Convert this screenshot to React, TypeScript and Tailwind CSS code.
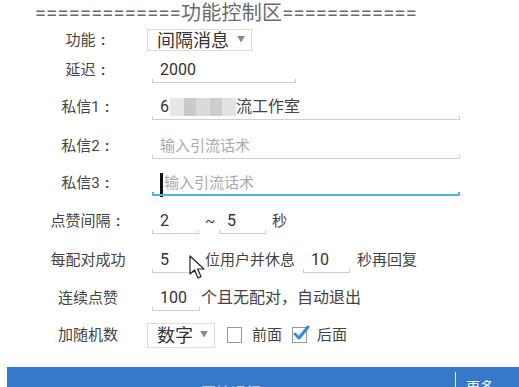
import React from "react";

const FONT = { fontFamily: 'Roboto, "Noto Sans CJK SC", sans-serif' };

function Underline({ focused = false }: { focused?: boolean }) {
  return focused ? (
    <div className="h-[4px] border-x-2 border-b-2 border-[#4cb3dc]" />
  ) : (
    <div className="h-[4px] border-x border-b border-[#cfcfcf]" />
  );
}

function Field({ width, children, focused }: { width: string; children?: React.ReactNode; focused?: boolean }) {
  return (
    <div className={`${width} flex flex-col mt-[4px]`}>
      <div className="h-[18px] flex items-center pl-[8px] text-[16px] text-[#333] whitespace-nowrap">{children}</div>
      <Underline focused={focused} />
    </div>
  );
}

function Label({ text, colon = false }: { text: string; colon?: boolean }) {
  return (
    <div className="w-[88px] text-center text-[15px] text-[#444] shrink-0 whitespace-nowrap">
      {text}
      {colon && <span className="inline-block w-[15px] text-center font-bold">:</span>}
    </div>
  );
}

function Caret() {
  return <span className="text-[#888] text-[8px] ml-auto mr-[6px]">▼</span>;
}

function Checkbox({ checked = false }: { checked?: boolean }) {
  return (
    <div className="relative w-[15px] h-[16px] border border-[#9a9a9a] bg-white">
      {checked && (
        <svg className="absolute -top-[3px] -left-[1px]" width="18" height="18" viewBox="0 0 18 18">
          <path d="M3 9 L7 13 L16 2" fill="none" stroke="#2b8ede" strokeWidth="3" strokeLinecap="round" strokeLinejoin="round" />
        </svg>
      )}
    </div>
  );
}

export default function App() {
  return (
    <div className="w-[519px] h-[387px] overflow-hidden bg-white relative" style={FONT}>
      {/* title */}
      <div className="h-[26px] flex items-center pl-[35px] text-[20px] tracking-[0.25px] text-[#6a6a6a] leading-none whitespace-nowrap">
        =============功能控制区============
      </div>

      <div className="pl-[44px]">
        {/* 功能 */}
        <div className="h-[28px] flex items-center">
          <Label text="功能" colon />
          <div className="ml-[15px] w-[105px] h-[22px] border border-[#dcdcdc] flex items-center pl-[9px] text-[18px] text-[#333]">
            间隔消息
            <Caret />
          </div>
        </div>

        {/* 延迟 */}
        <div className="h-[32px] flex items-center">
          <Label text="延迟" colon />
          <div className="ml-[20px]">
            <Field width="w-[144px]">2000</Field>
          </div>
        </div>

        {/* 私信1 */}
        <div className="h-[42px] flex items-center">
          <Label text="私信1" colon />
          <div className="ml-[20px]">
            <Field width="w-[308px]">
              <span>6</span>
              <span className="inline-flex h-[18px] ml-[1px]">
                <span className="w-[14px] bg-[#e6e6e6]" />
                <span className="w-[12px] bg-[#c9c9c9]" />
                <span className="w-[14px] bg-[#dadada]" />
                <span className="w-[12px] bg-[#cdcdcd]" />
                <span className="w-[14px] bg-[#e2e2e2]" />
              </span>
              <span className="text-[#444]">流工作室</span>
            </Field>
          </div>
        </div>

        {/* 私信2 */}
        <div className="h-[36px] flex items-center">
          <Label text="私信2" colon />
          <div className="ml-[20px]">
            <Field width="w-[308px]">
              <span className="text-[#aaa] text-[15px]">输入引流话术</span>
            </Field>
          </div>
        </div>

        {/* 私信3 */}
        <div className="h-[38px] flex items-center">
          <Label text="私信3" colon />
          <div className="ml-[20px]">
            <Field width="w-[308px]" focused>
              <span className="w-[3px] h-[24px] bg-[#111] mr-[1px] mt-[4px] shrink-0" />
              <span className="text-[#aaa] text-[15px]">输入引流话术</span>
            </Field>
          </div>
        </div>

        {/* 点赞间隔 */}
        <div className="h-[38px] flex items-center text-[15px] text-[#444]">
          <Label text="点赞间隔" colon />
          <div className="ml-[20px]">
            <Field width="w-[47px]">2</Field>
          </div>
          <span className="ml-[6px] w-[14px]">~</span>
          <Field width="w-[47px]">5</Field>
          <span className="ml-[6px]">秒</span>
        </div>

        {/* 每配对成功 */}
        <div className="h-[40px] flex items-center text-[15px] text-[#444] relative">
          <Label text="每配对成功" />
          <div className="ml-[20px]">
            <Field width="w-[46px]">5</Field>
          </div>
          <span className="ml-[7px]">位用户并休息</span>
          <div className="ml-[8px]">
            <Field width="w-[47px]">10</Field>
          </div>
          <span className="ml-[7px]">秒再回复</span>
          <svg className="absolute left-[145px] top-[15px]" width="18" height="26" viewBox="0 0 18 26">
            <path d="M1 1 L1 19 L5.5 15 L9 23 L12 21.6 L8.6 14 L15 14 Z" fill="#fff" stroke="#222" strokeWidth="1.2" strokeLinejoin="round" />
          </svg>
        </div>

        {/* 连续点赞 */}
        <div className="h-[36px] flex items-center text-[15px] text-[#444]">
          <Label text="连续点赞" />
          <div className="ml-[20px]">
            <Field width="w-[48px]">100</Field>
          </div>
          <span className="ml-[1px] text-[16px]">个且无配对，自动退出</span>
        </div>

        {/* 加随机数 */}
        <div className="h-[38px] flex items-center text-[15px] text-[#444]">
          <Label text="加随机数" />
          <div className="ml-[15px] w-[68px] h-[25px] border border-[#dcdcdc] flex items-center pl-[9px] text-[18px] text-[#333]">
            数字
            <Caret />
          </div>
          <div className="ml-[12px]">
            <Checkbox />
          </div>
          <span className="ml-[10px]">前面</span>
          <div className="ml-[10px]">
            <Checkbox checked />
          </div>
          <span className="ml-[10px]">后面</span>
        </div>
      </div>

      {/* bottom bar */}
      <div className="mt-[13px] ml-[7px] h-[40px] bg-[#3779c9] flex items-start">
        <div className="flex-1 text-center text-white/60 text-[15px] pt-[15px]">开始运行</div>
        <div className="w-px h-[30px] bg-white/90 mt-[5px]" />
        <div className="w-[63px] pl-[10px] pt-[10px] text-white text-[14px]">更多</div>
      </div>
    </div>
  );
}
